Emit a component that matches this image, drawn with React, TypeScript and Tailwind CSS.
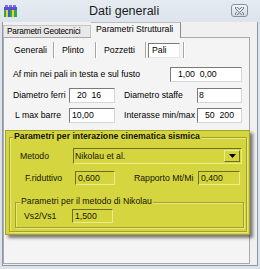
import React from "react";

const grayIn =
  "h-[15px] bg-white border border-t-[#7a7a7a] border-l-[#7a7a7a] border-b-[#d6d6d6] border-r-[#d6d6d6] flex items-center whitespace-pre leading-none";
const yelIn =
  "h-[14px] border border-t-[#6f6f22] border-l-[#6f6f22] border-b-[#ecec8c] border-r-[#ecec8c] flex items-center whitespace-pre leading-none";
const sep = "w-[2px] h-[16px] border-l border-l-[#a6a6a6] border-r border-r-white";

function AppIcon() {
  return (
    <svg width="13" height="12" viewBox="0 0 13 12">
      <rect x="0" y="2" width="13" height="3" fill="#5b4fd0" />
      <rect x="1" y="0" width="3" height="2" fill="#7c70e6" />
      <rect x="5" y="0" width="3" height="2" fill="#7c70e6" />
      <rect x="9" y="0" width="3" height="2" fill="#7c70e6" />
      <rect x="0" y="5" width="2" height="7" fill="#2fa84f" />
      <rect x="2" y="5" width="2" height="7" fill="#e6d52e" />
      <rect x="4" y="5" width="2" height="7" fill="#3a5ad6" />
      <rect x="6" y="5" width="2" height="7" fill="#2fa84f" />
      <rect x="8" y="5" width="2" height="7" fill="#e6d52e" />
      <rect x="10" y="5" width="3" height="7" fill="#2fa84f" />
    </svg>
  );
}

export default function App() {
  return (
    <div className="w-[260px] h-[269px] overflow-hidden bg-[#dce3eb] font-['Liberation_Sans',Arial,sans-serif] text-[8.7px] text-black">
      {/* Title bar */}
      <div className="h-[22px] flex items-start bg-gradient-to-b from-[#e6ebf1] to-[#dde4ec]">
        <div className="ml-[4px] mt-[5px]">
          <AppIcon />
        </div>
        <div className="ml-[72px] mt-[5px] text-[12.5px] leading-none text-[#1b1b1b]">Dati generali</div>
        <div className="ml-auto mr-[12px] mt-[4px] w-[17px] h-[13px] rounded-[3px] border border-[#8590a0] bg-gradient-to-b from-[#f3f5f8] to-[#d3dae2] flex items-center justify-center">
          <svg width="9" height="8" viewBox="0 0 9 8">
            <path d="M1.5 1 L7.5 7 M7.5 1 L1.5 7" stroke="#6b7480" strokeWidth="3" strokeLinecap="round" />
            <path d="M1.5 1 L7.5 7 M7.5 1 L1.5 7" stroke="#f4f5f7" strokeWidth="1.3" strokeLinecap="round" />
          </svg>
        </div>
      </div>

      {/* Client area */}
      <div className="ml-[2px] w-[256px] h-[244px] bg-[#f0f0f0] border-l border-r border-b border-[#8d98a5]">
        {/* Tab headers */}
        <div className="h-[15px] flex items-end">
          <div className="w-[88px] h-[12px] bg-[#e9e9e9] border border-b-0 border-[#c4c4c4] flex items-center pl-[3px] leading-none whitespace-nowrap text-[8.3px] tracking-[-0.2px] overflow-hidden">
            Parametri Geotecnici
          </div>
          <div className="relative z-10 -mb-px w-[90px] h-[16px] bg-[#f4f4f4] border-t border-r border-t-[#bcbcbc] border-r-[#8c8c8c] flex items-center pl-[5px] pb-[2px] leading-none whitespace-nowrap">
            Parametri Strutturali
          </div>
        </div>

        {/* Tab page */}
        <div className="w-[247px] h-[227px] bg-[#f4f4f4] border border-[#a9a9a9]">
          {/* Sub tabs */}
          <div className="mt-[4px] h-[16px] flex items-center">
            <div className="w-[49px] pl-[10px] leading-none">Generali</div>
            <div className={sep} />
            <div className="w-[40px] pl-[7px] leading-none">Plinto</div>
            <div className={sep} />
            <div className="w-[48px] pl-[7px] leading-none">Pozzetti</div>
            <div className={sep} />
            <div className="ml-[1px] w-[32px] h-[15px] bg-white border border-t-[#7a7a7a] border-l-[#7a7a7a] border-b-[#e6e6e6] border-r-[#e6e6e6] flex items-center pl-[3px] leading-none">
              Pali
            </div>
            <div className={`ml-[3px] ${sep}`} />
          </div>

          {/* Row 1 */}
          <div className="mt-[9px] h-[15px] flex items-center">
            <div className="w-[166px] pl-[9px] leading-none whitespace-nowrap">Af min nei pali in testa e sul fusto</div>
            <div className={`w-[72px] pl-[7px] ${grayIn}`}>{"1,00  0,00"}</div>
          </div>

          {/* Row 2 */}
          <div className="mt-[6px] h-[15px] flex items-center">
            <div className="w-[65px] pl-[9px] leading-none whitespace-nowrap">Diametro ferri</div>
            <div className={`w-[46px] pl-[7px] ${grayIn}`}>{"20  16"}</div>
            <div className="w-[82px] pl-[9px] leading-none whitespace-nowrap">Diametro staffe</div>
            <div className={`w-[45px] pl-[1px] ${grayIn}`}>8</div>
          </div>

          {/* Row 3 */}
          <div className="mt-[5px] h-[15px] flex items-center">
            <div className="w-[65px] pl-[11px] leading-none whitespace-nowrap">L max barre</div>
            <div className={`w-[46px] pl-[2px] ${grayIn}`}>10,00</div>
            <div className="w-[82px] pl-[9px] leading-none whitespace-nowrap">Interasse min/max</div>
            <div className={`w-[45px] pl-[7px] ${grayIn}`}>{"50  200"}</div>
          </div>

          {/* Highlighted yellow area */}
          <div className="mt-[7px] ml-[1px] w-[245px] h-[105px] bg-[#d5d540] border border-[#a3a32c] shadow-[3px_3px_3px_rgba(0,0,0,0.5)] text-[#151500]">
            {/* Group 1 */}
            <div className="relative mt-[6px] ml-[3px] w-[238px] h-[95px] border border-[#a1a134] shadow-[1px_1px_0_#e8e87a,inset_1px_1px_0_#e8e87a]">
              <div className="absolute -top-[6px] left-[3px] px-[1px] bg-[#d5d540] leading-none whitespace-nowrap font-semibold">
                Parametri per interazione cinematica sismica
              </div>

              {/* Metodo */}
              <div className="mt-[10px] h-[16px] flex items-center">
                <div className="w-[63px] pl-[10px] leading-none">Metodo</div>
                <div className="w-[169px] h-[16px] border border-t-[#6f6f22] border-l-[#6f6f22] border-b-[#ecec8c] border-r-[#ecec8c] flex items-center pl-[1px] leading-none">
                  <span>Nikolau et al.</span>
                  <div className="ml-auto mr-[1px] w-[16px] h-[12px] border border-t-[#ecec8c] border-l-[#ecec8c] border-b-[#6f6f22] border-r-[#6f6f22] flex items-center justify-center">
                    <svg width="7" height="4" viewBox="0 0 7 4">
                      <path d="M0 0 L7 0 L3.5 4 Z" fill="#000" />
                    </svg>
                  </div>
                </div>
              </div>

              {/* F.riduttivo */}
              <div className="mt-[7px] h-[14px] flex items-center">
                <div className="w-[65px] pl-[15px] leading-none whitespace-nowrap">F.riduttivo</div>
                <div className={`w-[40px] pl-[2px] ${yelIn}`}>0,600</div>
                <div className="ml-[19px] w-[64px] leading-none whitespace-nowrap">Rapporto Mt/Mi</div>
                <div className={`w-[42px] pl-[2px] ${yelIn}`}>0,400</div>
              </div>

              {/* Group 2 */}
              <div className="relative mt-[17px] ml-[5px] w-[229px] h-[26px] border border-[#a1a134] shadow-[1px_1px_0_#e8e87a,inset_1px_1px_0_#e8e87a]">
                <div className="absolute -top-[6px] left-[4px] px-[1px] bg-[#d5d540] leading-none whitespace-nowrap">
                  Parametri per il metodo di Nikolau
                </div>
                <div className="mt-[6px] h-[14px] flex items-center">
                  <div className="w-[56px] pl-[8px] leading-none">Vs2/Vs1</div>
                  <div className={`w-[41px] pl-[2px] ${yelIn}`}>1,500</div>
                </div>
              </div>
            </div>
          </div>
        </div>
      </div>
    </div>
  );
}
